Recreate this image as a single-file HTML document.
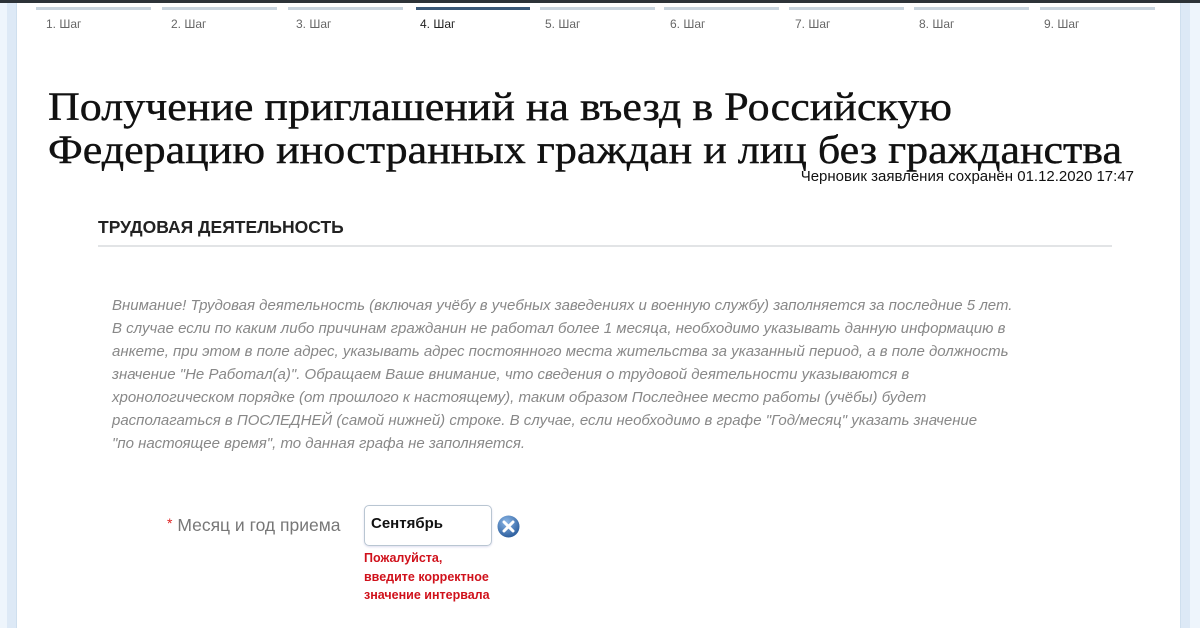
<!DOCTYPE html>
<html><head><meta charset="utf-8"><style>
body{margin:0;width:1200px;height:628px;overflow:hidden;background:#fff;font-family:"Liberation Sans",sans-serif;position:relative}
.a{position:absolute}
.bar{position:absolute;top:7px;height:3px;background:#c9d5df;width:115px}
.lab{position:absolute;top:17px;font-size:12px;color:#666}
</style></head><body>
<div class="a" style="left:0;top:0;width:1200px;height:3px;background:#2d3338"></div>
<div class="a" style="left:0;top:3px;width:7px;height:625px;background:#eef5fc"></div>
<div class="a" style="left:7px;top:3px;width:9px;height:625px;background:#dde9f6;border-right:1px solid #cfdfee"></div>
<div class="a" style="left:1180px;top:3px;width:10px;height:625px;background:#dde9f6;border-left:1px solid #cfdfee"></div>
<div class="a" style="left:1190px;top:3px;width:10px;height:625px;background:#eef5fc"></div>

<div class="bar" style="left:36px"></div><div class="lab" style="left:46px">1. Шаг</div>
<div class="bar" style="left:162px"></div><div class="lab" style="left:171px">2. Шаг</div>
<div class="bar" style="left:288px"></div><div class="lab" style="left:296px">3. Шаг</div>
<div class="bar" style="left:416px;width:114px;background:#3a5877"></div><div class="lab" style="left:420px;color:#222">4. Шаг</div>
<div class="bar" style="left:540px"></div><div class="lab" style="left:545px">5. Шаг</div>
<div class="bar" style="left:664px"></div><div class="lab" style="left:670px">6. Шаг</div>
<div class="bar" style="left:789px"></div><div class="lab" style="left:795px">7. Шаг</div>
<div class="bar" style="left:914px"></div><div class="lab" style="left:919px">8. Шаг</div>
<div class="bar" style="left:1040px"></div><div class="lab" style="left:1044px">9. Шаг</div>

<div class="a" style="left:48px;top:85px;font-family:'Liberation Serif',serif;font-size:40px;line-height:43px;color:#111;white-space:nowrap;transform:scaleX(1.1);transform-origin:0 0;-webkit-text-stroke:0.4px #111">Получение приглашений на въезд в Российскую<br>Федерацию иностранных граждан и лиц без гражданства</div>
<div class="a" style="left:734px;top:168px;font-size:15px;color:#111;width:400px;text-align:right">Черновик заявления сохранён 01.12.2020 17:47</div>

<div class="a" style="left:98px;top:217px;font-size:17.5px;font-weight:bold;color:#222">ТРУДОВАЯ ДЕЯТЕЛЬНОСТЬ</div>
<div class="a" style="left:98px;top:245px;width:1014px;height:2px;background:#e2e4e6"></div>

<div class="a" style="left:112px;top:294px;font-size:15px;line-height:23px;color:#888;font-style:italic;white-space:nowrap">Внимание! Трудовая деятельность (включая учёбу в учебных заведениях и военную службу) заполняется за последние 5 лет.<br>В случае если по каким либо причинам гражданин не работал более 1 месяца, необходимо указывать данную информацию в<br>анкете, при этом в поле адрес, указывать адрес постоянного места жительства за указанный период, а в поле должность<br>значение "Не Работал(а)". Обращаем Ваше внимание, что сведения о трудовой деятельности указываются в<br>хронологическом порядке (от прошлого к настоящему), таким образом Последнее место работы (учёбы) будет<br>располагаться в ПОСЛЕДНЕЙ (самой нижней) строке. В случае, если необходимо в графе "Год/месяц" указать значение<br>"по настоящее время", то данная графа не заполняется.</div>

<div class="a" style="left:167px;top:515px;font-size:17.5px;color:#777"><span style="color:#d22;font-size:14px;vertical-align:3px">*</span> Месяц и год приема</div>
<div class="a" style="left:364px;top:505px;width:126px;height:39px;border:1px solid #b9c6d2;border-radius:5px;box-shadow:0 1px 2px #dde"></div>
<div class="a" style="left:371px;top:515px;font-size:15px;font-weight:bold;color:#111">Сентябрь</div>
<svg class="a" style="left:497px;top:515px" width="23" height="23" viewBox="0 0 23 23"><defs><radialGradient id="g" cx="40%" cy="30%" r="70%"><stop offset="0" stop-color="#8db8e8"/><stop offset="1" stop-color="#2d5f9e"/></radialGradient></defs><circle cx="11.5" cy="11.5" r="11" fill="url(#g)"/><path d="M7 7L16 16M16 7L7 16" stroke="#fff" stroke-width="3" stroke-linecap="round"/></svg>
<div class="a" style="left:364px;top:549px;font-size:12.5px;line-height:18.5px;font-weight:bold;color:#d0111b">Пожалуйста,<br>введите корректное<br>значение интервала</div>
</body></html>
